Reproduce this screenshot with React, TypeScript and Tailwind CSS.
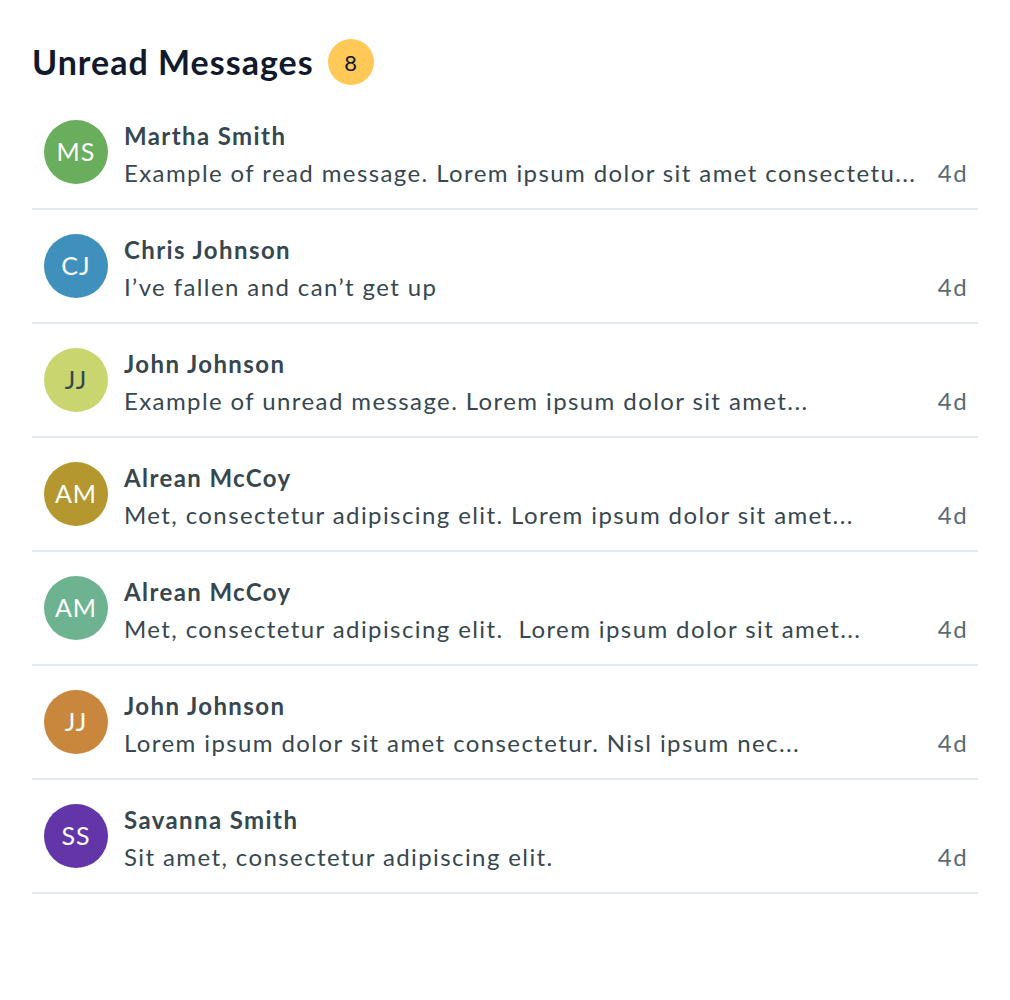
import React from "react";

type Msg = { initials: string; name: string; text: string; bg: string; fg: string };

const msgs: Msg[] = [
  { initials: "MS", name: "Martha Smith", text: "Example of read message. Lorem ipsum dolor sit amet consectetu...", bg: "bg-[#6aae5d]", fg: "text-white" },
  { initials: "CJ", name: "Chris Johnson", text: "I\u2019ve fallen and can\u2019t get up", bg: "bg-[#3f90bd]", fg: "text-white" },
  { initials: "JJ", name: "John Johnson", text: "Example of unread message. Lorem ipsum dolor sit amet...", bg: "bg-[#c9d56e]", fg: "text-[#37474f]" },
  { initials: "AM", name: "Alrean McCoy", text: "Met, consectetur adipiscing elit. Lorem ipsum dolor sit amet...", bg: "bg-[#b4982f]", fg: "text-white" },
  { initials: "AM", name: "Alrean McCoy", text: "Met, consectetur adipiscing elit.\u00a0 Lorem ipsum dolor sit amet...", bg: "bg-[#6db391]", fg: "text-white" },
  { initials: "JJ", name: "John Johnson", text: "Lorem ipsum dolor sit amet consectetur. Nisl ipsum nec...", bg: "bg-[#c8873d]", fg: "text-white" },
  { initials: "SS", name: "Savanna Smith", text: "Sit amet, consectetur adipiscing elit.", bg: "bg-[#6236a8]", fg: "text-white" },
];

export default function App() {
  return (
    <div className="min-h-[1000px] w-[1010px] bg-white px-8 pt-[39px]" style={{ fontFamily: "Lato, 'Noto Sans', sans-serif" }}>
      <div className="flex h-[46px] items-center gap-[14px]">
        <h1 className="text-[34px] font-bold leading-none tracking-[1px] text-[#111a2c]">Unread Messages</h1>
        <span className="flex h-[46px] w-[46px] items-center justify-center rounded-full bg-[#ffc857] text-[22px] text-[#111a2c]">8</span>
      </div>
      <ul className="mt-[11px]">
        {msgs.map((m, i) => (
          <li key={i} className="flex h-[114px] items-center border-b-2 border-[#dfe9ee] pl-3 pr-[10px]">
            <div className={`flex h-16 w-16 shrink-0 items-center justify-center rounded-full ${m.bg} ${m.fg} text-[25px] tracking-[1px]`}>
              {m.initials}
            </div>
            <div className="ml-4 mt-[3px] flex min-w-0 flex-1 flex-col">
              <div className="text-[24px] font-bold leading-[37px] tracking-[1.4px] text-[#37474f]">{m.name}</div>
              <div className="flex items-center justify-between">
                <span className="truncate text-[24px] leading-[37px] tracking-[1.4px] text-[#37474f]">{m.text}</span>
                <span className="ml-5 shrink-0 text-[24px] leading-[37px] tracking-[1.4px] text-[#5a6c76]">4d</span>
              </div>
            </div>
          </li>
        ))}
      </ul>
    </div>
  );
}
